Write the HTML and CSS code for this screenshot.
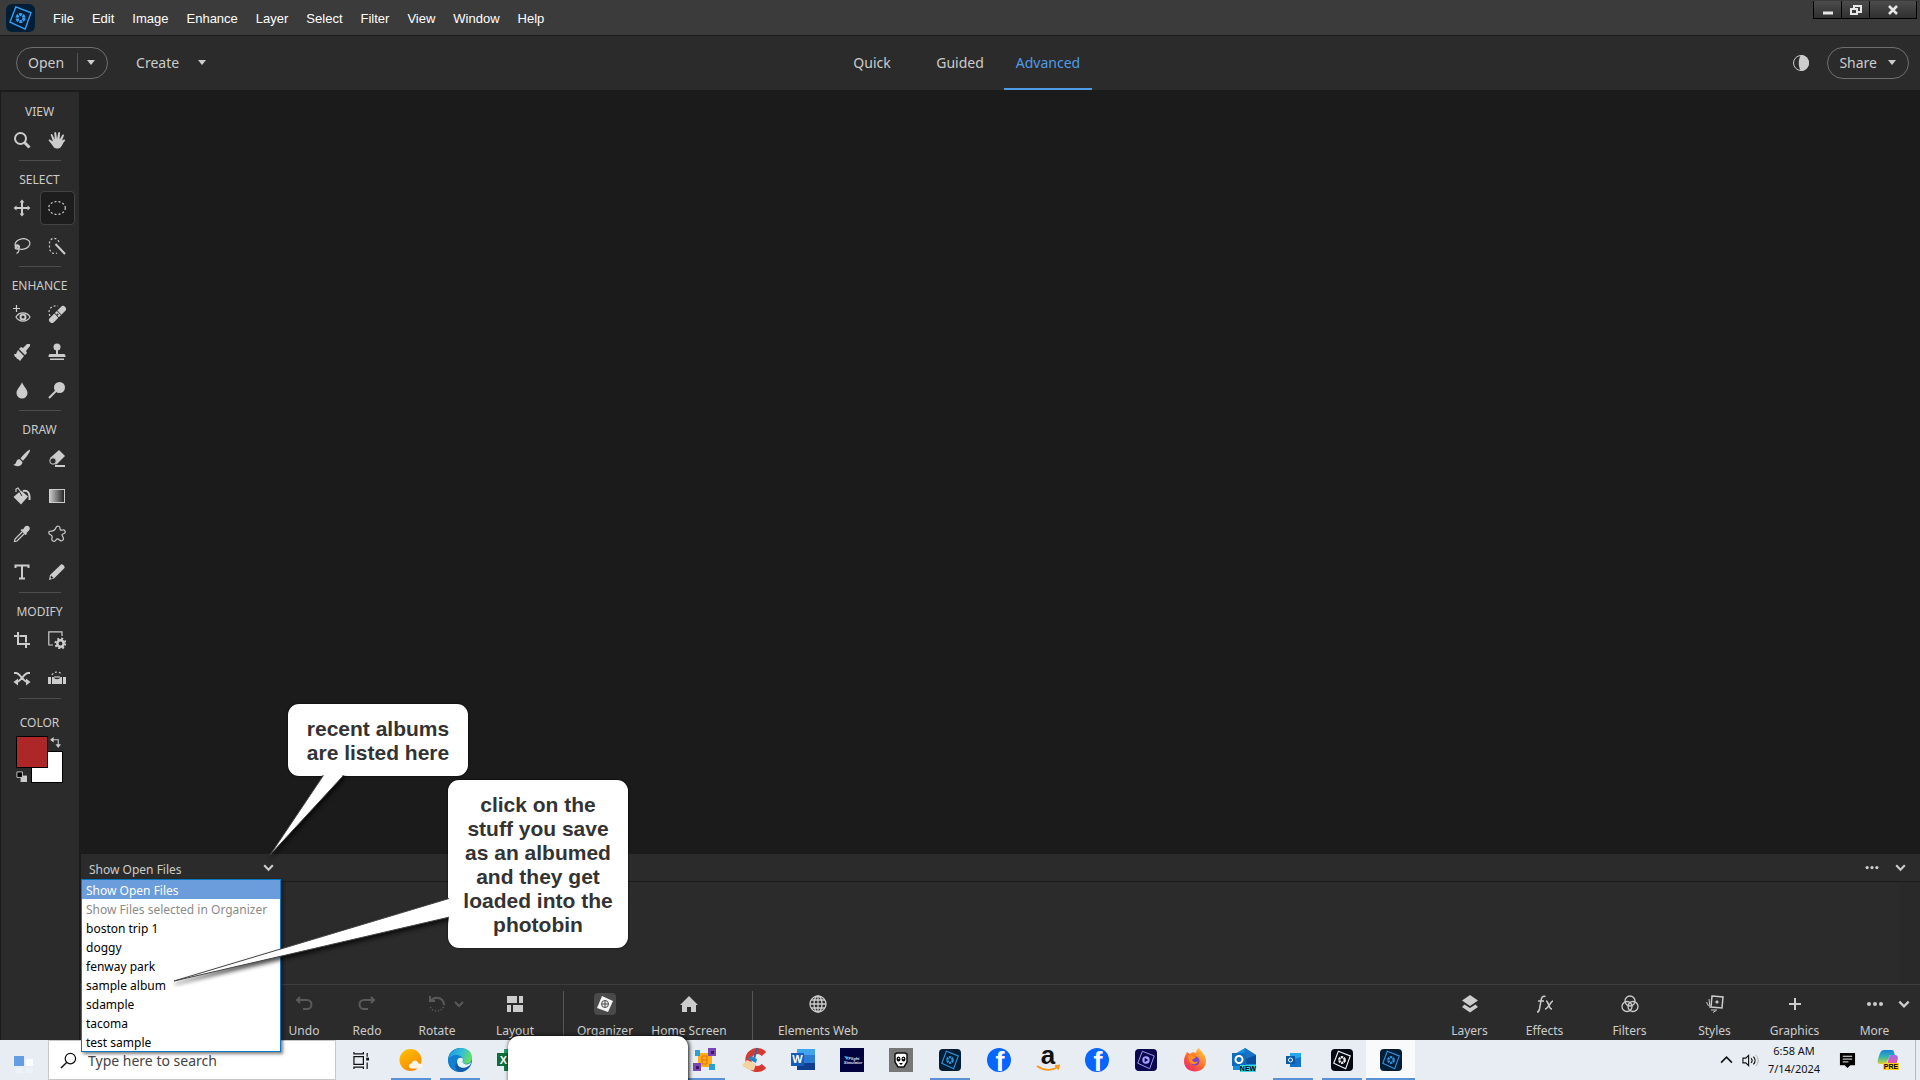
FILE: index.html
```html
<!DOCTYPE html>
<html lang="en">
<head>
  <meta charset="UTF-8" />
  <title>Photo Editor</title>
  <link rel="stylesheet" href="styles.css">
</head>
<body>
  <svg class="defs" width="0" height="0" aria-hidden="true">
    <defs>
      <linearGradient id="gradTool"><stop offset="0" stop-color="#ccc"/><stop offset="1" stop-color="#222"/></linearGradient>
      <linearGradient id="sun" x2="0.6" y2="1"><stop offset="0" stop-color="#ffc400"/><stop offset="1" stop-color="#f78a00"/></linearGradient>
      <linearGradient id="edgeA" x2="1" y2="0.3"><stop offset="0" stop-color="#1b8fe0"/><stop offset="0.6" stop-color="#31bfd8"/><stop offset="1" stop-color="#63dd6a"/></linearGradient>
      <linearGradient id="fox" x1="1" x2="0.2" y2="1"><stop offset="0" stop-color="#ffe14a"/><stop offset="0.5" stop-color="#ff7a2a"/><stop offset="1" stop-color="#f0246a"/></linearGradient>
      <linearGradient id="copA" x2="0" y2="1"><stop offset="0" stop-color="#1b7fe0"/><stop offset="0.5" stop-color="#35b6a8"/><stop offset="1" stop-color="#d8d431"/></linearGradient>
      <linearGradient id="copB" x2="0" y2="1"><stop offset="0" stop-color="#9b6cf0"/><stop offset="0.6" stop-color="#e857a8"/><stop offset="1" stop-color="#ff9050"/></linearGradient>
      <symbol id="aperture" viewBox="0 0 24 24">
        <path d="M8 2.500 21 7.500 16 21.500 3 15.500Z" fill="none" stroke="currentColor" stroke-width="1.200"/>
        <circle cx="12" cy="12" r="3" fill="none" stroke="currentColor" stroke-width="2.600" stroke-dasharray="2.400 0.750"/>
      </symbol>
      <symbol id="chevron" viewBox="0 0 12 12"><path d="M2 4l4 4 4-4" fill="none" stroke="currentColor" stroke-width="2"/></symbol>
    </defs>
  </svg>

  <header class="menubar">
    <svg class="app-logo" viewBox="0 0 24 24"><use href="#aperture"/></svg>
    <nav class="menus">
      <button>File</button>
      <button>Edit</button>
      <button>Image</button>
      <button>Enhance</button>
      <button>Layer</button>
      <button>Select</button>
      <button>Filter</button>
      <button>View</button>
      <button>Window</button>
      <button>Help</button>
    </nav>
    <div class="window-buttons">
      <button aria-label="Minimize"><svg viewBox="0 0 14 12"><path d="M2 9h10" stroke="#e6e6e6" stroke-width="3"/></svg></button>
      <button aria-label="Restore"><svg viewBox="0 0 14 12"><path d="M5 4V2h7v6H9M2 5h6v5H2Z" fill="none" stroke="#e6e6e6" stroke-width="2"/></svg></button>
      <button class="close" aria-label="Close"><svg viewBox="0 0 14 12"><path d="M3 2l8 8M11 2l-8 8" stroke="#e6e6e6" stroke-width="2.500"/></svg></button>
    </div>
  </header>

  <div class="modebar">
    <div class="mode-left">
      <div class="pill">
        <button class="open">Open</button>
        <button class="open-more" aria-label="Open recent"><span class="caret"></span></button>
      </div>
      <button class="create">Create <span class="caret"></span></button>
    </div>
    <nav class="tabs">
      <a href="#quick">Quick</a>
      <a href="#guided">Guided</a>
      <a href="#advanced" class="active">Advanced</a>
    </nav>
    <div class="mode-right">
      <button class="theme" aria-label="Appearance"><svg viewBox="0 0 18 18"><circle cx="9" cy="9" r="7.500" fill="none" stroke="#ccc"/><path d="M9 1a8 8 0 0 1 0 16c-3-4-3-12 0-16Z" fill="#ccc"/></svg></button>
      <button class="pill share">Share <span class="caret"></span></button>
    </div>
  </div>

  <main class="workspace">
    <aside class="toolbox">
      <section class="tool-group">
        <h2>VIEW</h2>
        <div class="tools">
          <button aria-label="Zoom"><svg viewBox="0 0 18 18"><circle cx="7.500" cy="7.500" r="5.500" class="line2"/><path d="M11.500 11.500l5 5" class="line3"/></svg></button>
          <button aria-label="Hand"><svg viewBox="0 0 18 18"><path d="M6 16.500C4 14 2.500 11.500.8 9.800c-.5-1 .8-1.600 1.600-1L5 10.500 2.800 4.200c-.2-1.300 1.300-1.500 1.700-.5L6.700 8.500 6.300 2c.1-1.200 1.700-1.200 1.900 0L9 8l1.200-6.300c.3-1.200 1.800-1 1.800.2L11.700 8.500l2.600-4.600c.7-1 2-.3 1.600.8L14 9.500l1.800-1c1-.4 1.900.5 1.200 1.300-2 2-2.500 4.700-4.500 6.700C11 17.800 7.500 17.800 6 16.500Z" class="solid"/></svg></button>
        </div>
      </section>
      <section class="tool-group">
        <h2>SELECT</h2>
        <div class="tools">
          <button aria-label="Move"><svg viewBox="0 0 18 18"><path d="M9 2v14M2 9h14" class="line2"/><path d="M9 .5l2.500 3h-5ZM9 17.500l2.500-3h-5ZM.5 9l3-2.500v5ZM17.500 9l-3-2.500v5Z" class="solid"/></svg></button>
          <button class="selected" aria-label="Elliptical Marquee"><svg viewBox="0 0 18 18"><ellipse cx="9" cy="9" rx="8.300" ry="6.500" class="line dash"/></svg></button>
          <button aria-label="Lasso"><svg viewBox="0 0 18 18"><ellipse cx="9.500" cy="7" rx="7.500" ry="5.200" class="line" transform="rotate(-10 9.500 7)"/><path d="M2 9c1-2 4-1 4.500.5S4 13 2.500 11.500 4 8 5.500 10c1.500 3 0 5.500-2 6.500" class="line"/></svg></button>
          <button aria-label="Quick Selection"><svg viewBox="0 0 18 18"><path d="M11 5C9 0 2 0 1.500 6v5c0 4 4 6.500 7.500 5" class="line dash"/><path d="M7.500 7l9.500 10" class="line2"/></svg></button>
        </div>
      </section>
      <section class="tool-group">
        <h2>ENHANCE</h2>
        <div class="tools">
          <button aria-label="Red Eye Removal"><svg viewBox="0 0 18 18"><path d="M3.500 0v7M0 3.500h7" class="line"/><path d="M3 12c3-5.500 11-5.500 14 0-3 5.500-11 5.500-14 0Z" class="line"/><circle cx="10" cy="12" r="2.500" class="line2"/></svg></button>
          <button aria-label="Spot Healing"><svg viewBox="0 0 18 18"><path d="M2 11C-1 5 3 0 10 1" class="line dash"/><path d="M4 15L15 4" stroke="#ccc" stroke-width="6" stroke-linecap="round"/><path d="M6.500 8l4.500 5M9 5.500l4.500 5" stroke="#2b2b2b"/><circle cx="9.500" cy="9.500" r="1" fill="#2b2b2b"/></svg></button>
          <button aria-label="Smart Brush"><svg viewBox="0 0 18 18"><path d="M10 5l4-4 3 0v2l-4 5 1 2-2 2-6-6 2-2ZM5 7l6 6-4 5-2-2-1 0-1-2-1 0-1-3 2 0Z" class="solid"/></svg></button>
          <button aria-label="Clone Stamp"><svg viewBox="0 0 18 18"><circle cx="9" cy="4" r="3.500" class="solid"/><path d="M8 6h2v5h6c1 0 1.500 1 1.500 3h-17c0-2 .5-3 1.500-3h6ZM2 15.500h14V17H2Z" class="solid"/></svg></button>
          <button aria-label="Blur"><svg viewBox="0 0 18 18"><path d="M9 1c1 4 5.500 7 5.500 11a5.500 5.500 0 0 1-11 0C3.500 8 8 5 9 1Z" class="solid"/></svg></button>
          <button aria-label="Dodge"><svg viewBox="0 0 18 18"><circle cx="11.500" cy="6.500" r="5.500" class="solid"/><path d="M8 10l-7 7" class="line2"/></svg></button>
        </div>
      </section>
      <section class="tool-group">
        <h2>DRAW</h2>
        <div class="tools">
          <button aria-label="Brush"><svg viewBox="0 0 18 18"><path d="M17 .8c-1-.5-6 4-9.500 8.700l2.500 2.300C14 7.500 17.700 2 17 .8ZM6.700 10.200C4 9.800 3.500 12 3 13.500c-.3 1.200-1.300 2-2.500 2 2 2.500 8.500 2.500 9-2.500Z" class="solid"/></svg></button>
          <button aria-label="Eraser"><svg viewBox="0 0 18 18"><path d="M11 1l6 6-8 8c-2 2-8-3-7-6Z" class="solid"/><circle cx="5" cy="12" r="3.200" fill="#2b2b2b" stroke="#ccc"/><path d="M7 17h10" class="line2"/></svg></button>
          <button aria-label="Paint Bucket"><svg viewBox="0 0 18 18"><path d="M8 3.500l7 6-7 8L.5 10Z" class="solid"/><path d="M3 5V2l2-1 4 6" class="line"/><path d="M6 4l3 5" stroke="#2b2b2b"/><path d="M10 4c5-1 7 2 6.500 9" class="line2"/></svg></button>
          <button aria-label="Gradient"><svg viewBox="0 0 18 18"><rect x="1.500" y="2.500" width="15" height="13" fill="url(#gradTool)" stroke="#ccc"/></svg></button>
          <button aria-label="Color Picker"><svg viewBox="0 0 18 18"><path d="M12 1.500c1-1 3-1 4 0s1 3 0 4L13.500 8l.5 1-1.500 1-5-5L9 4l1 .5Z" class="solid"/><path d="M9.500 6.500L2 14l-.5 2.500L4 16l7.500-7.500" class="line"/></svg></button>
          <button aria-label="Custom Shape"><svg viewBox="0 0 18 18"><path d="M8 2.500c1-2 4-1.500 4 .5 0 2 .5 2.500 2.500 2 3-.5 3.500 2.500 1.500 3.500-2.500 1-2.500 1.500-1 3.500 1.500 3-1.500 5-3.500 3-1.500-1.500-2.500-1.500-3.500 0-1.500 2.500-5 1-4-2 .5-1.500.5-2-1-3C0 9 0 6 3 6c3 .3 4-1 5-3.500Z" class="line"/></svg></button>
          <button aria-label="Type"><svg viewBox="0 0 18 18"><path d="M2.500 5V2.500h13V5M9 2.500v13M6 15.500h6" class="line2"/></svg></button>
          <button aria-label="Pencil"><svg viewBox="0 0 18 18"><path d="M13 1.500c1-1 4.500 2 3.500 3.500L6 15.500 1 17l1-5Z" class="solid"/><path d="M3 12.500l2.500 2.500-2 .7-1-1.200Z" fill="#2b2b2b"/></svg></button>
        </div>
      </section>
      <section class="tool-group">
        <h2>MODIFY</h2>
        <div class="tools">
          <button aria-label="Crop"><svg viewBox="0 0 18 18"><path d="M5 1v12h12M1 5h3M6.500 5H13v6.500M13 14v3" class="line2"/></svg></button>
          <button aria-label="Recompose"><svg viewBox="0 0 18 18"><path d="M14 5V.8H.8V14H5" class="line"/><circle cx="12.500" cy="12.500" r="3.200" fill="none" stroke="#ccc" stroke-width="2.500"/><circle cx="12.500" cy="12.500" r="5" fill="none" stroke="#ccc" stroke-width="2" stroke-dasharray="2 1.930"/></svg></button>
          <button aria-label="Content Aware Move"><svg viewBox="0 0 18 18"><path d="M1 4h2c4 0 7 9 12 9M17 4h-2c-4 0-7 9-12 9" class="line2"/><path d="M5 9.500v7L.5 13ZM13 9.500v7l4.500-3.500Z" class="solid"/></svg></button>
          <button aria-label="Straighten"><svg viewBox="0 0 18 18"><path d="M0 8h3v7H0ZM15 8h3v7h-3ZM4 8h1.500c1 3 6 3 7 0H14v7H4Z" class="solid"/><path d="M6 8h6" class="line"/><path d="M4 6c2-4 8-4 10 0" class="line dash"/></svg></button>
        </div>
      </section>
      <section class="color-group">
        <h2>COLOR</h2>
        <div class="swatches">
          <button class="swatch back" aria-label="Background color"></button>
          <button class="swatch front" aria-label="Foreground color"></button>
          <button class="swap" aria-label="Swap colors"><svg viewBox="0 0 12 12"><path d="M3 3h6v6" class="line"/><path d="M4 0v6L0 3ZM6 8h6l-3 4Z" class="solid"/></svg></button>
          <button class="reset" aria-label="Default colors"><svg viewBox="0 0 12 12"><path d="M5 5h7v7H5Z" class="solid"/><path d="M1 1h6v6H1Z" fill="#000" stroke="#ccc"/></svg></button>
        </div>
      </section>
    </aside>

    <div class="stage">
      <div class="canvas"></div>

      <div class="photobin">
        <div class="bin-header">
          <div class="bin-filter">
            <select aria-label="Photo bin source">
              <option>Show Open Files</option>
            </select>
            <svg viewBox="0 0 12 12"><use href="#chevron"/></svg>
          </div>
          <div class="bin-actions">
            <button aria-label="Photo bin options"><svg class="dots" viewBox="0 0 16 16"><circle cx="2" cy="8" r="2"/><circle cx="8" cy="8" r="2"/><circle cx="14" cy="8" r="2"/></svg></button>
            <button aria-label="Collapse photo bin"><svg viewBox="0 0 12 12"><use href="#chevron"/></svg></button>
          </div>
        </div>
        <div class="bin-body"></div>

        <select class="bin-list" size="9" aria-label="Albums">
          <option class="current">Show Open Files</option>
          <option disabled>Show Files selected in Organizer</option>
          <option>boston trip 1</option>
          <option>doggy</option>
          <option>fenway park</option>
          <option>sample album</option>
          <option>sdample</option>
          <option>tacoma</option>
          <option>test sample</option>
        </select>

        <svg class="tails" viewBox="0 0 369 212">
          <g class="tail-shapes">
            <path d="M243 -3 263 -3 263 1 190 80 243 1Z"/>
            <path d="M374 122 374 141 94 206Z"/>
          </g>
        </svg>
        <p class="callout callout-albums">recent albums are listed here</p>
        <p class="callout callout-load">click on the stuff you save as an albumed and they get loaded into the photobin</p>
      </div>

      <footer class="taskpane">
        <div class="actions">
          <button class="dim"><svg viewBox="0 0 18 18"><path d="M5 2L2 5l3 3M2 5h10a4 4 0 0 1 0 9H8"/></svg><span>Undo</span></button>
          <button class="dim"><svg viewBox="0 0 18 18"><path d="M13 2l3 3-3 3M16 5H6a4 4 0 0 0 0 9h4"/></svg><span>Redo</span></button>
          <button class="dim rotate"><svg viewBox="0 0 18 18"><path d="M2 1v5h5M3 6c3-5 12-4 13 3"/><path d="M16 9c0 9-14 9-14 1" stroke-dasharray="1 2"/></svg><svg class="mini" viewBox="0 0 12 12"><use href="#chevron"/></svg><span>Rotate</span></button>
          <button><svg viewBox="0 0 18 18"><path d="M1 1h10v7H1ZM13 1h4v7h-4ZM1 10h4v7H1ZM7 10h10v7H7Z" class="solid"/></svg><span>Layout</span></button>
        </div>
        <div class="apps">
          <button><svg class="organizer" viewBox="0 0 22 22"><path d="M8 3l11 5-5 11L3 15Z" fill="#f4f4f4"/><circle cx="11" cy="11" r="3.500" fill="none" stroke="#444"/><path d="M11 8v6M8 11h6" stroke="#444"/></svg><span>Organizer</span></button>
          <button><svg viewBox="0 0 18 18"><path d="M9 1l9 9h-2v7h-5v-5H7v5H2v-7H0Z" class="solid"/></svg><span>Home Screen</span></button>
        </div>
        <div class="web">
          <button><svg viewBox="0 0 18 18" stroke-width="1.300"><circle cx="9" cy="9" r="8"/><ellipse cx="9" cy="9" rx="4" ry="8"/><path d="M9 1v16M1 9h16M2 5h14M2 13h14"/></svg><span>Elements Web</span></button>
        </div>
        <div class="panels">
          <button><svg viewBox="0 0 18 18"><path d="M9 0l8 5.500L9 11 1 5.500ZM3.500 9.500L9 13l5.500-3.500L17 12l-8 5.500L1 12Z" class="solid"/></svg><span>Layers</span></button>
          <button><svg viewBox="0 0 18 18"><path d="M9.500 1.500c-3-1-4 1-4.500 4L3.500 14c-.4 2-1 3-2.500 3M2 6h6M10 6c3 0 2 8 6 8M17 6c-2 0-5 8-8 8" stroke-width="1.500"/></svg><span>Effects</span></button>
          <button><svg viewBox="0 0 18 18" stroke-width="1.300"><circle cx="9" cy="6" r="5"/><circle cx="6" cy="11.500" r="5"/><circle cx="12" cy="11.500" r="5"/></svg><span>Filters</span></button>
          <button><svg viewBox="0 0 18 18"><path d="M6 1l11 1-1 11-11-1Z" stroke-width="1.500"/><path d="M3 4l1 9M.5 7l2 4M5 15l6 0M7 17.500l3-2"/><path d="M11 4.500l.8 1.700 1.700.8-1.700.8-.8 1.700-.8-1.700-1.700-.8 1.700-.8Z" class="solid"/></svg><span>Styles</span></button>
          <button><svg viewBox="0 0 18 18"><path d="M9 3v12M3 9h12" stroke-width="2"/></svg><span>Graphics</span></button>
          <button><svg class="dots" viewBox="0 0 16 16"><circle cx="2" cy="8" r="2"/><circle cx="8" cy="8" r="2"/><circle cx="14" cy="8" r="2"/></svg><span>More</span></button>
          <button class="expand" aria-label="More panels"><svg viewBox="0 0 12 12"><use href="#chevron"/></svg></button>
        </div>
      </footer>
    </div>
  </main>

  <div class="taskbar">
    <button class="start" aria-label="Start"><svg viewBox="0 0 20 20"><path d="M0 0h10v10H0Z" fill="#649de0"/><path d="M12 3h7v7h-7Z" fill="#fbfcfe"/><path d="M2 12h7v5H2ZM12 12h7v5h-7Z" fill="#edf2f8"/></svg></button>
    <label class="search">
      <svg viewBox="0 0 18 18"><circle cx="11" cy="7" r="5.500" fill="none" stroke="#111" stroke-width="1.300"/><path d="M7 11l-6 6" stroke="#111" stroke-width="1.500"/></svg>
      <input type="text" placeholder="Type here to search" aria-label="Search">
    </label>
    <button class="taskview" aria-label="Task View"><svg viewBox="0 0 18 18"><path d="M1 5h10v8H1ZM1 0v2h10V0M1 18v-2h10v2M15 1v4M15 11v7" fill="none" stroke="#111" stroke-width="1.300"/><path d="M14 6h3v3h-3Z" fill="#111"/></svg></button>
    <div class="pinned">
      <button class="running" aria-label="Weather"><svg viewBox="0 0 24 24"><circle cx="11.500" cy="12" r="11" fill="url(#sun)"/><path d="M13 20.500c-4 0-4-5-.5-5 1-4 6-4 7 0 5 0 5 5 1 5Z" fill="#fff4e8"/></svg></button>
      <button class="running" aria-label="Edge"><svg viewBox="0 0 24 24"><circle cx="12" cy="12" r="12" fill="#1269b8"/><path d="M0 12C1-3 24-4 24 10c0 6-7 7-9 5-1-1 1-2 0-4C13 6 3 6 0 12Z" fill="url(#edgeA)"/><path d="M0 12C3 6 12 6 14 10c-3-1-5 1-5 4 0 6 7 9 12 5-4 7-17 6-20-2Z" fill="#1180d0"/><path d="M9 14c0-3 2-5 5-4 2 1 0 3 1 5 2 2 6 2 8-1-1 8-14 8-14 0Z" fill="#e6f5fa"/><path d="M9 14c0 6 7 8 13 3-2 4-6 7-10 7-5-1-6-7-3-10Z" fill="#155ca8"/></svg></button>
      <button aria-label="Excel"><svg viewBox="0 0 24 24"><path d="M7 1h17v22H7Z" fill="#21a366"/><path d="M7 12h17v11H7Z" fill="#107c41"/><rect y="5" width="13" height="13" fill="#0f6e3a"/><text x="6.500" y="16" class="app-letter">X</text></svg></button>
      <button aria-label="Mail"></button>
      <button aria-label="Store"></button>
      <button aria-label="Files"></button>
      <button class="running" aria-label="Family"><svg viewBox="0 0 24 24"><path d="M3 4l18 16M20 4L4 20" stroke="#e79a18" stroke-width="3"/><path d="M7 5h9l3 3v8l-3 3H8l-3-3V8Z" fill="#ffad16"/><path d="M15 0h8v8h-8ZM0 15h8v8H0Z" fill="#7a45b5"/><path d="M2 2h5v6H2ZM16 16h6v6h-6Z" fill="#28a0d8"/><path d="M9 8h5v8H9ZM9 12h5" fill="none" stroke="#e26c12"/><path d="M18 3h3v3h-3ZM3 18h3v3H3Z" fill="#3b1766"/></svg></button>
      <button aria-label="Cleaner"><svg viewBox="0 0 24 24"><path d="M22 6A9 9 0 1 0 22 18" fill="none" stroke="#d63a2f" stroke-width="6"/><path d="M15 0l-3 11" stroke="#2b6ca8" stroke-width="2"/><path d="M8 8l7 3-1 4-8-4Z" fill="#2784c8"/><path d="M5 12l9 4-2 6c-4 1-10-2-12-5Z" fill="#f3d2a4"/></svg></button>
      <button aria-label="Word"><svg viewBox="0 0 24 24"><path d="M6 1h18v21H6Z" fill="#2b7cd3"/><path d="M6 1h18v6H6Z" fill="#41a5ee"/><path d="M6 15h18v7H6Z" fill="#103f91"/><rect y="5" width="13" height="13" fill="#185abd"/><text x="6.500" y="15" class="app-letter">W</text></svg></button>
      <button aria-label="Flight Simulator"><svg viewBox="0 0 24 24"><path d="M0 0h24v24H0Z" fill="#03023e"/><path d="M4 8l5 1-2 3Z" fill="#3db4e8"/><text x="14" y="12" class="badge-text">Flight</text><text x="13" y="16" class="badge-text">Simulator</text></svg></button>
      <button aria-label="Panda"><svg viewBox="0 0 24 24"><path d="M0 0h24v24H0Z" fill="#777"/><path d="M6 6l2-1h8l2 1v8l-3 5H9l-3-5Z" fill="#fff" stroke="#111" stroke-width="1.500"/><ellipse cx="9.500" cy="11" rx="2" ry="2.500"/><ellipse cx="14.500" cy="11" rx="2" ry="2.500"/><circle cx="9.700" cy="10.500" r=".7" fill="#fff"/><circle cx="14.300" cy="10.500" r=".7" fill="#fff"/><path d="M10 15h4l-2 2Z"/></svg></button>
      <button class="running" aria-label="Photo Editor"><svg class="tile blue" viewBox="0 0 24 24"><use href="#aperture"/></svg></button>
      <button aria-label="Facebook"><svg viewBox="0 0 24 24"><circle cx="12" cy="12" r="12" fill="#0866ff"/><text x="13" y="23" class="fb-letter">f</text></svg></button>
      <button aria-label="Amazon"><svg viewBox="0 0 24 24"><text x="12" y="16" class="amazon-letter">a</text><path d="M1 18c7 5 15 5 21 1M19 18l4-.5-1 4" fill="none" stroke="#f79a1c" stroke-width="1.800"/></svg></button>
      <button aria-label="Facebook"><svg viewBox="0 0 24 24"><circle cx="12" cy="12" r="12" fill="#0866ff"/><text x="13" y="23" class="fb-letter">f</text></svg></button>
      <button aria-label="Video Editor"><svg class="tile violet" viewBox="0 0 24 24"><path d="M8 2.500 21 7.500 16 21.500 3 15.500Z" fill="none" stroke="currentColor"/><circle cx="12" cy="12" r="4" fill="currentColor"/><path d="M10.500 9.500l4 2.500-4 2.500Z" fill="#0c0850"/></svg></button>
      <button aria-label="Firefox"><svg viewBox="0 0 24 24"><path d="M3 6l1-2 3 2c2-2 4-2 6-1 0-2 1-4 3-5 1 3 7 6 7 13 0 14-22 14-22 0 0-3 1-5 2-7Z" fill="url(#fox)"/><circle cx="12" cy="13" r="4.500" fill="#7b46c8"/><path d="M5 8c3-2 5 0 8 1-1 2-4 2-4 3 2 3 4 2 6 1-2 5-9 5-10-5Z" fill="#ff8f1f"/></svg></button>
      <button aria-label="Outlook New"><svg viewBox="0 0 24 24"><path d="M1 7L13 0l11 7v15H1Z" fill="#1490df"/><path d="M13 0l11 7-12 7Z" fill="#1b6fc4"/><path d="M11 12L24 7v9H11Z" fill="#0a4f9e"/><rect y="5" width="14" height="13" fill="#0f6cbd"/><circle cx="7" cy="11.500" r="3.500" fill="none" stroke="#fff" stroke-width="2"/><path d="M8 17h16v7H8Z" fill="#36d9e4"/><text x="16" y="23" class="tag">NEW</text></svg></button>
      <button class="running" aria-label="Outlook"><svg viewBox="0 0 24 24"><path d="M9 5h11v14H9Z" fill="#28a8ea"/><path d="M9 12l11-3v10H9Z" fill="#1373cc"/><rect x="5" y="8" width="9" height="8" fill="#0a5ba8"/><circle cx="9.500" cy="12" r="2" fill="none" stroke="#fff"/></svg></button>
      <button class="running" aria-label="Organizer"><svg class="tile black" viewBox="0 0 24 24"><use href="#aperture"/></svg></button>
      <button class="running focused" aria-label="Photo Editor"><svg class="tile blue" viewBox="0 0 24 24"><use href="#aperture"/></svg></button>
    </div>
    <div class="tray">
      <button aria-label="Show hidden icons"><svg class="up" viewBox="0 0 12 12"><path d="M1 8l5-5 5 5" fill="none" stroke="#111" stroke-width="1.500"/></svg></button>
      <button aria-label="Volume"><svg viewBox="0 0 18 18"><path d="M1 6.500h3l3-3v11l-3-3H1Z" fill="none" stroke="#111" stroke-width="1.200"/><path d="M9.500 6.500c1.500 1.500 1.500 3.500 0 5M12 5c2.500 2.500 2.500 5.500 0 8" fill="none" stroke="#111" stroke-width="1.200"/><path d="M14.500 3c3.500 3.500 3.500 8.500 0 12" fill="none" stroke="#aaa"/></svg></button>
      <div class="clock"><span>6:58 AM</span><span>7/14/2024</span></div>
      <button class="notes" aria-label="Notifications"><svg viewBox="0 0 18 18"><path d="M1 1h16v13h-5l-3 3-3-3H1Z" fill="#000"/><path d="M4 4.500h10M4 7.500h10M4 10.500h6" stroke="#fff"/></svg></button>
      <button class="copilot" aria-label="Copilot"><svg viewBox="0 0 22 22"><path d="M7 1h8c2 0 2 3 3 5h-5L9 15H3c-4 0-2-5-1-8s2-6 5-6Z" fill="url(#copA)"/><path d="M14 6h4c4 0 3 4 2 7s-2 5-5 5H8c3 0 3-12 6-12Z" fill="url(#copB)"/><path d="M6 14h16v7H6Z" fill="#ffd21f"/><text x="14" y="20" class="tag">PRE</text></svg></button>
    </div>
    <div class="callout callout-blank"></div>
  </div>
</body>
</html>
```
FILE: styles.css
```css
* {
  box-sizing: border-box;
}
body {
  margin: 0;
  height: 100vh;
  display: flex;
  flex-direction: column;
  overflow: hidden;
  background: #1b1b1b;
  color: #ccc;
  font-family: "Noto Sans", "Open Sans", sans-serif;
  font-size: 12px;
}
button {
  padding: 0;
  border: none;
  background: none;
  color: inherit;
  font: inherit;
}
svg {
  display: block;
}
.defs {
  position: absolute;
}
.solid {
  fill: #ccc;
  stroke: none;
}
.line,
.line2,
.line3 {
  fill: none;
  stroke: #ccc;
  stroke-width: 1.2;
}
.line2 {
  stroke-width: 2;
}
.line3 {
  stroke-width: 3;
}
.dash {
  stroke-dasharray: 2 2;
}
.caret {
  border: 4px solid transparent;
  border-top: 5px solid #ccc;
  border-bottom: none;
}

/* menu bar */
.menubar {
  display: flex;
  align-items: center;
  height: 36px;
  padding: 1px 0 0 6px;
  background: #3b3b3b;
  border-bottom: 1px solid #1b1b1b;
}
.app-logo {
  width: 29px;
  height: 28px;
  border-radius: 6px;
  background: #021e36;
  color: #31a0f5;
}
.menus {
  display: flex;
  gap: 18px;
  margin-left: 18px;
  color: #fff;
  font-family: "Liberation Sans", Arial, sans-serif;
  font-size: 13px;
}
.window-buttons {
  display: flex;
  align-self: flex-start;
  gap: 1px;
  margin: 0 3px 0 auto;
  padding: 0 1px 1px;
  background: #000;
}
.window-buttons button {
  display: grid;
  place-items: center;
  width: 27px;
  height: 17px;
  background: linear-gradient(#4c4c4c, #303030);
}
.window-buttons .close {
  width: 46px;
}
.window-buttons svg {
  width: 14px;
  height: 12px;
}

/* mode bar */
.modebar {
  display: grid;
  grid-template-columns: 1fr auto 1fr;
  height: 54px;
  background: #2b2b2b;
  font-size: 14px;
}
.mode-left,
.mode-right {
  display: flex;
  align-items: center;
  padding-bottom: 1px;
}
.mode-left {
  padding-left: 16px;
}
.mode-right {
  justify-content: flex-end;
  padding-right: 11px;
  gap: 17px;
}
.pill {
  display: flex;
  align-items: center;
  height: 32px;
  border: 1px solid #6e6e6e;
  border-radius: 16px;
}
.open {
  padding: 0 13px 0 11px;
}
.open-more {
  height: 19px;
  padding: 0 12px 0 9px;
  border-left: 1px solid #555;
}
.open-more .caret {
  display: block;
}
.create {
  display: flex;
  align-items: center;
  gap: 19px;
  margin-left: 28px;
}
.theme svg {
  width: 18px;
  height: 18px;
}
.share {
  gap: 11px;
  padding: 0 12px 0 11px;
}
.tabs {
  display: grid;
  grid-template-columns: repeat(3, 88px);
}
.tabs a {
  display: grid;
  place-items: center;
  border-bottom: 2px solid transparent;
  color: #ccc;
  text-decoration: none;
}
.tabs .active {
  border-color: #4f9be6;
  color: #4f9be6;
}

/* toolbox */
.workspace {
  flex: 1;
  display: flex;
  min-height: 0;
}
.toolbox {
  width: 78px;
  margin: 2px 0 0 1px;
  padding: 2px 1px 0 0;
  background: #2b2b2b;
}
.toolbox h2 {
  margin: 0;
  padding-top: 10px;
  height: 27px;
  font-size: 12px;
  font-weight: normal;
  line-height: 16px;
  text-align: center;
}
.tool-group {
  padding-bottom: 1px;
}
.tool-group::after {
  content: "";
  display: block;
  width: 42px;
  height: 1px;
  margin: 1px auto 0;
  background: #4d4d4d;
}
.tools {
  display: grid;
  grid-template-columns: 35px 35px;
  grid-auto-rows: 38px;
  justify-content: center;
  align-items: center;
}
.tools button {
  display: grid;
  place-items: center;
  height: 34px;
  border: 1px solid transparent;
  border-radius: 4px;
}
.tools .selected {
  background: #1d1d1d;
  border-color: #444;
}
.tools svg {
  width: 18px;
  height: 18px;
}
.color-group {
  padding-top: 5px;
}
.swatches {
  position: relative;
  width: 47px;
  height: 47px;
  margin: 4px auto 0;
}
.swatches button {
  position: absolute;
}
.swatch {
  width: 32px;
  height: 32px;
  border: 1px solid #000;
}
.front {
  left: 0;
  top: 0;
  background: #ad2729;
}
.back {
  right: 0;
  bottom: 0;
  background: #fff;
}
.swap {
  right: 2px;
  top: 1px;
}
.reset {
  left: 0;
  bottom: 1px;
}
.swatches svg {
  width: 11px;
  height: 11px;
}

/* canvas and photo bin */
.stage {
  flex: 1;
  display: flex;
  flex-direction: column;
  min-width: 0;
}
.canvas {
  flex: 1;
  background: #1b1b1b;
}
.photobin {
  position: relative;
  z-index: 2;
  margin-left: 2px;
}
.bin-header {
  display: flex;
  justify-content: space-between;
  height: 28px;
  background: #2b2b2b;
  border-bottom: 1px solid #1b1b1b;
}
.bin-filter {
  display: flex;
  align-items: center;
  width: 194px;
  padding-left: 8px;
}
.bin-filter select {
  flex: 1;
  appearance: none;
  padding: 3px 0 0;
  border: none;
  background: none;
  color: #ccc;
  font: inherit;
}
.bin-filter svg,
.bin-actions svg {
  width: 13px;
  height: 13px;
}
.bin-actions {
  display: flex;
  align-items: center;
  gap: 14px;
  padding-right: 13px;
}
.bin-actions .dots,
.panels .dots {
  width: 16px;
}
.dots circle {
  fill: #ccc;
  stroke: none;
}
.bin-body {
  height: 102px;
  background: #2b2b2b;
  border-right: 20px solid #292929;
}
.bin-list {
  position: absolute;
  left: 0;
  top: 25px;
  width: 200px;
  height: 173px;
  padding: 0;
  border: 1px solid #0a78c0;
  border-radius: 0;
  background: #fff;
  box-shadow: 2px 2px 3px rgba(0, 0, 0, 0.5);
  font: inherit;
  overflow: hidden;
}
.bin-list option {
  height: 19px;
  min-height: 19px;
  padding: 2px 4px 0;
  color: #000;
  line-height: 17px;
}
.bin-list option:disabled {
  color: #8a8a8a;
}
.bin-list .current {
  background: #6b9cdb;
  color: #fff;
}

/* speech balloons */
.callout {
  position: absolute;
  margin: 0;
  width: 180px;
  padding: 13px 8px 11px;
  border-radius: 11px;
  background: #fff;
  color: #333;
  box-shadow: 0 0 2px #000;
  font-family: "Liberation Sans", Arial, sans-serif;
  font-size: 21px;
  font-weight: bold;
  line-height: 24px;
  text-align: center;
}
.callout-albums {
  left: 207px;
  top: -150px;
}
.callout-load {
  left: 367px;
  top: -74px;
}
.callout-blank {
  left: 508px;
  top: -4px;
  z-index: 3;
  height: 60px;
  box-shadow: 1px 0 4px #000;
}
.tails {
  position: absolute;
  left: -1px;
  top: -79px;
  z-index: 1;
  width: 369px;
  height: 212px;
  pointer-events: none;
}
.tail-shapes {
  fill: #fff;
  stroke: #444;
  stroke-width: 1;
  filter: drop-shadow(1px 3px 2px rgba(0, 0, 0, 0.7));
}

/* bottom bar */
.taskpane {
  display: flex;
  height: 56px;
  margin-left: 1px;
  padding: 6px 9px 0 194px;
  background: #2b2b2b;
  border-top: 1px solid #3d3d3d;
}
.taskpane > div {
  display: grid;
}
.actions {
  grid-template-columns: 60px 66px 74px 82px;
}
.apps {
  grid-template-columns: 82px 86px;
  margin-left: 7px;
  padding-right: 20px;
  border: solid #555;
  border-width: 0 1px;
}
.web {
  grid-template-columns: 130px;
}
.panels {
  grid-template-columns: 105px 45px 125px 45px 115px 45px 14px;
  margin-left: auto;
}
.taskpane button {
  position: relative;
  display: flex;
  flex-direction: column;
  align-items: center;
  gap: 9px;
  padding-top: 4px;
  line-height: 17px;
  white-space: nowrap;
}
.taskpane svg {
  width: 18px;
  height: 18px;
  fill: none;
  stroke: #ccc;
}
.taskpane .dim svg {
  stroke: #5a5a5a;
  stroke-width: 2;
  color: #5a5a5a;
}
.taskpane .organizer {
  width: 22px;
  height: 22px;
  margin: -2px 0;
  border-radius: 4px;
  background: #4a4a4a;
  stroke: none;
}
.taskpane .mini {
  position: absolute;
  right: 9px;
  top: 7px;
  width: 12px;
  height: 12px;
}
.taskpane .expand svg {
  width: 14px;
}

/* windows taskbar */
.taskbar {
  position: relative;
  display: flex;
  height: 40px;
  background: #e8edf3;
  color: #111;
}
.start {
  width: 48px;
  padding: 11px 0 0 14px;
}
.start svg {
  width: 20px;
  height: 20px;
}
.search {
  display: flex;
  align-items: center;
  gap: 11px;
  width: 288px;
  padding-left: 11px;
  background: #fff;
  border: 1px solid #c8c8c8;
}
.search svg {
  width: 17px;
  height: 17px;
}
.search input {
  flex: 1;
  min-width: 0;
  padding: 0;
  border: none;
  background: none;
  font: 14px "Noto Sans", "Open Sans", sans-serif;
}
.search input::placeholder {
  color: #444;
}
.taskview {
  display: grid;
  place-items: center;
  width: 50px;
}
.taskview svg {
  width: 17px;
  height: 17px;
}
.pinned {
  display: flex;
}
.pinned button {
  display: grid;
  place-items: center;
  width: 49px;
}
.pinned svg {
  width: 24px;
  height: 24px;
  overflow: visible;
}
.pinned .tile {
  width: 22px;
  height: 22px;
  border-radius: 4px;
}
.blue {
  background: #021e36;
  color: #3192dd;
}
.violet {
  background: #0c0850;
  color: #a9a4ff;
}
.black {
  background: #050a12;
  color: #f4f4f4;
}
.running {
  background: linear-gradient(#5a92d5, #5a92d5) center bottom / 40px 2px no-repeat;
}
.focused {
  background-color: #f8fafc;
  background-size: 100% 2px;
}
.pinned text,
.copilot text {
  font-family: "Liberation Sans", Arial, sans-serif;
  font-weight: bold;
  text-anchor: middle;
}
.app-letter {
  fill: #fff;
  font-size: 11px;
}
.badge-text {
  fill: #d9e6f2;
  font-size: 4px;
  font-style: italic;
}
.fb-letter {
  fill: #fff;
  font-size: 27px;
}
.amazon-letter {
  fill: #111;
  font-size: 26px;
}
.tag {
  fill: #000;
  font-size: 7px;
}
.tray {
  display: flex;
  align-items: center;
  margin: 0 4px 0 auto;
  padding-right: 16px;
  border-right: 1px solid #b4bac0;
}
.tray svg {
  width: 17px;
  height: 17px;
}
.tray .up {
  width: 13px;
  height: 13px;
  margin-right: 9px;
}
.clock {
  width: 70px;
  font-size: 11px;
  line-height: 18px;
  text-align: center;
}
.clock span {
  display: block;
}
.notes {
  margin: 0 21px 0 10px;
}
.tray .copilot svg {
  width: 22px;
  height: 22px;
}
```
